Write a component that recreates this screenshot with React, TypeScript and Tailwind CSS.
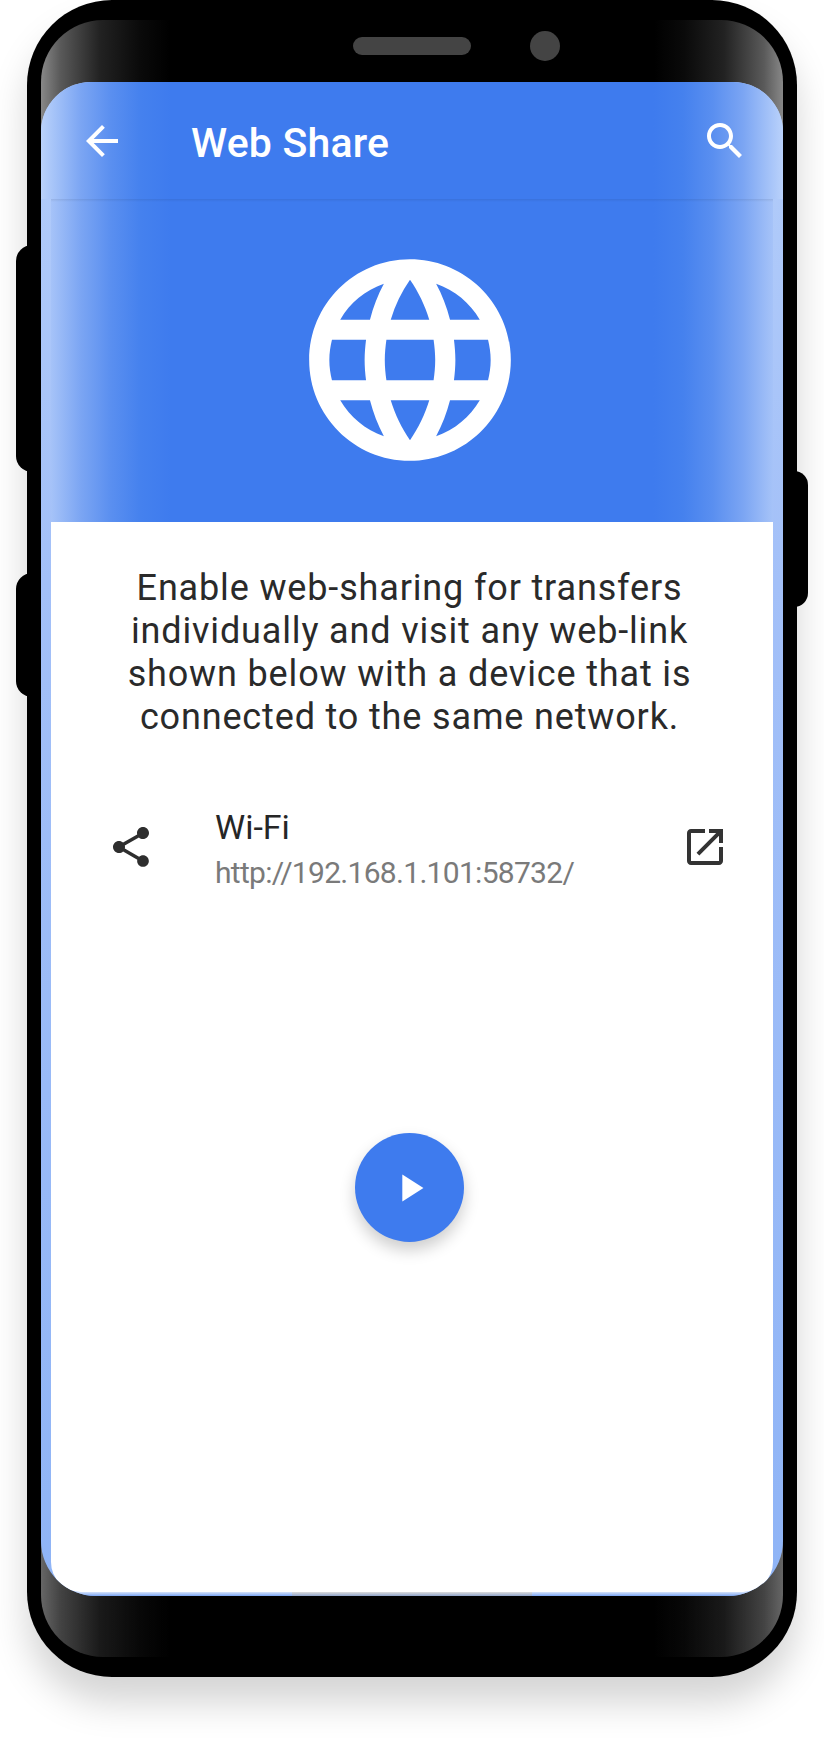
const font = { fontFamily: "Roboto, sans-serif" };

function Icon({ d, size = 48, className = "" }: { d: string; size?: number; className?: string }) {
  return (
    <svg viewBox="0 0 24 24" width={size} height={size} className={className} fill="currentColor">
      <path d={d} />
    </svg>
  );
}

const GLOBE = "M11.99 2C6.47 2 2 6.48 2 12s4.47 10 9.99 10C17.52 22 22 17.52 22 12S17.52 2 11.99 2zm6.93 6h-2.95c-.32-1.25-.78-2.45-1.38-3.56 1.84.63 3.37 1.91 4.33 3.56zM12 4.04c.83 1.2 1.48 2.53 1.91 3.96h-3.82c.43-1.43 1.08-2.76 1.91-3.96zM4.26 14C4.1 13.36 4 12.69 4 12s.1-1.36.26-2h3.38c-.08.66-.14 1.32-.14 2 0 .68.06 1.34.14 2H4.26zm.82 2h2.95c.32 1.25.78 2.45 1.38 3.56-1.84-.63-3.37-1.9-4.33-3.56zm2.95-8H5.08c.96-1.66 2.49-2.93 4.33-3.56C8.81 5.55 8.35 6.75 8.03 8zM12 19.96c-.83-1.2-1.48-2.53-1.91-3.96h3.82c-.43 1.43-1.08 2.76-1.91 3.96zM14.34 14H9.66c-.09-.66-.16-1.32-.16-2 0-.68.07-1.35.16-2h4.68c.09.65.16 1.32.16 2 0 .68-.07 1.34-.16 2zm.25 5.56c.6-1.11 1.06-2.31 1.38-3.56h2.95c-.96 1.65-2.49 2.93-4.33 3.56zM16.36 14c.08-.66.14-1.32.14-2 0-.68-.06-1.34-.14-2h3.38c.16.64.26 1.31.26 2s-.1 1.36-.26 2h-3.38z";

export default function App() {
  return (
    <div className="w-[824px] h-[1742px] bg-white overflow-hidden" style={font}>
      <div className="relative ml-[27px] w-[770px] h-[1677px] rounded-[85px] bg-black px-[14px] py-[20px] shadow-[0_26px_36px_rgba(0,0,0,0.17)]">
        {/* side buttons */}
        <div className="absolute left-[-11px] top-[245px] w-[20px] h-[227px] rounded-l-[16px] bg-black" />
        <div className="absolute left-[-11px] top-[573px] w-[20px] h-[124px] rounded-l-[16px] bg-black" />
        <div className="absolute right-[-11px] top-[471px] w-[20px] h-[136px] rounded-r-[14px] bg-black" />

        {/* bezel */}
        <div className="h-full rounded-[62px] overflow-hidden bg-[linear-gradient(180deg,rgba(0,0,0,0)_1000px,rgba(0,0,0,0.25)_1000px),linear-gradient(90deg,#888888_0,#5a5a5a_19px,#222222_59px,#0a0a0a_99px,#000_129px,#000_613px,#0a0a0a_643px,#222222_683px,#5a5a5a_723px,#888888_100%)]">
          <div className="h-[62px] flex items-start pl-[312px] pt-[11px]">
            <div className="h-[30px] flex items-center gap-[59px]">
              <div className="w-[118px] h-[18px] rounded-full bg-[#444444]" />
              <div className="w-[30px] h-[30px] rounded-full bg-[#444444]" />
            </div>
          </div>

          {/* screen */}
          <div className="relative h-[1514px] rounded-t-[50px] rounded-b-[55px] overflow-hidden flex flex-col bg-[linear-gradient(180deg,#b3cdfa_0,#a3c0f8_500px,#8fb4f6_100%)]">
            <header className="h-[117px] shrink-0 flex items-center pl-[37px] pr-[34px] text-white bg-[linear-gradient(90deg,#bad2fb_0,#7ba5f3_40px,#5a8ff0_70px,#4581ee_100px,#3e7bee_130px,#3e7bee_612px,#4581ee_642px,#5a8ff0_672px,#7ba5f3_702px,#bad2fb_100%)]">
              <Icon className="mt-[1px]" d="M20 11H7.83l5.59-5.59L12 4l-8 8 8 8 1.41-1.41L7.83 13H20v-2z" />
              <h1 className="ml-[65px] mt-[6px] flex-1 text-[41px] font-medium leading-none tracking-[0.2px]">Web Share</h1>
              <Icon d="M15.5 14h-.79l-.28-.27C15.41 12.59 16 11.11 16 9.5 16 5.91 13.09 3 9.5 3S3 5.91 3 9.5 5.91 16 9.5 16c1.61 0 3.09-.59 4.23-1.57l.27.28v.79l5 4.99L20.49 19l-4.99-5zm-6 0C7.01 14 5 11.99 5 9.5S7.01 5 9.5 5 14 7.01 14 9.5 11.99 14 9.5 14z" />
            </header>

            <div className="flex-1 min-h-0 mx-[10px] flex flex-col">
              <section className="h-[323px] shrink-0 flex flex-col text-white bg-[linear-gradient(90deg,#a6c3f8_0,#7ba5f3_30px,#5a8ff0_60px,#4581ee_90px,#3e7bee_120px,#3e7bee_602px,#4581ee_632px,#5a8ff0_662px,#7ba5f3_692px,#a6c3f8_100%)]">
                <div className="h-[3px] shrink-0 bg-[linear-gradient(180deg,rgba(0,0,0,0.08),rgba(0,0,0,0))]" />
                <div className="flex-1 flex items-center justify-center pr-[5px] pb-[5px]">
                  <Icon size={242} d={GLOBE} />
                </div>
              </section>

              <main className="flex-1 min-h-0 bg-white rounded-b-[30px] flex flex-col">
                <p className="pt-[45px] pl-[35px] pr-[40px] text-center text-[36px] leading-[43px] tracking-[0.85px] text-[#2a2a2a]">
                  Enable web-sharing for transfers<br />
                  individually and visit any web-link<br />
                  shown below with a device that is<br />
                  connected to the same network.
                </p>

                <div className="mt-[64px] pl-[56px] pr-[44px] flex items-center">
                  <Icon className="-mt-[4px] text-[#2e2e2e]" d="M18 16.08c-.76 0-1.44.3-1.96.77L8.91 12.7c.05-.23.09-.46.09-.7s-.04-.47-.09-.7l7.05-4.11c.54.5 1.25.81 2.04.81 1.66 0 3-1.34 3-3s-1.34-3-3-3-3 1.34-3 3c0 .24.04.47.09.7L8.04 9.81C7.5 9.31 6.79 9 6 9c-1.66 0-3 1.34-3 3s1.34 3 3 3c.79 0 1.5-.31 2.04-.81l7.12 4.16c-.05.21-.08.43-.08.65 0 1.61 1.31 2.92 2.92 2.92 1.61 0 2.92-1.31 2.92-2.92s-1.31-2.92-2.92-2.92z" />
                  <div className="ml-[60px] flex-1">
                    <div className="text-[34px] leading-[48px] text-[#262626]">Wi-Fi</div>
                    <div className="text-[30px] leading-[44px] tracking-[-0.7px] text-[#7a7a7a]">http://192.168.1.101:58732/</div>
                  </div>
                  <Icon className="-mt-[4px] text-[#333333]" d="M19 19H5V5h7V3H5c-1.11 0-2 .9-2 2v14c0 1.1.89 2 2 2h14c1.1 0 2-.9 2-2v-7h-2v7zM14 3v2h3.59l-9.83 9.83 1.41 1.41L19 6.41V10h2V3h-7z" />
                </div>

                <div className="mt-[238px] flex justify-center pr-[5px]">
                  <button className="w-[109px] h-[109px] rounded-full bg-[#3e7bee] text-white flex items-center justify-center shadow-[0_8px_16px_rgba(0,0,0,0.2)]">
                    <Icon size={46} d="M8 5v14l11-7z" />
                  </button>
                </div>
              </main>
            </div>

            <div className="h-[4px] shrink-0 flex justify-center bg-[linear-gradient(180deg,#d6e3fb,#7ba5f3)]">
              <div className="w-[240px] h-full bg-[linear-gradient(180deg,#dcdcdc,#8fa3c9)]" />
            </div>
          </div>
        </div>
      </div>
    </div>
  );
}
